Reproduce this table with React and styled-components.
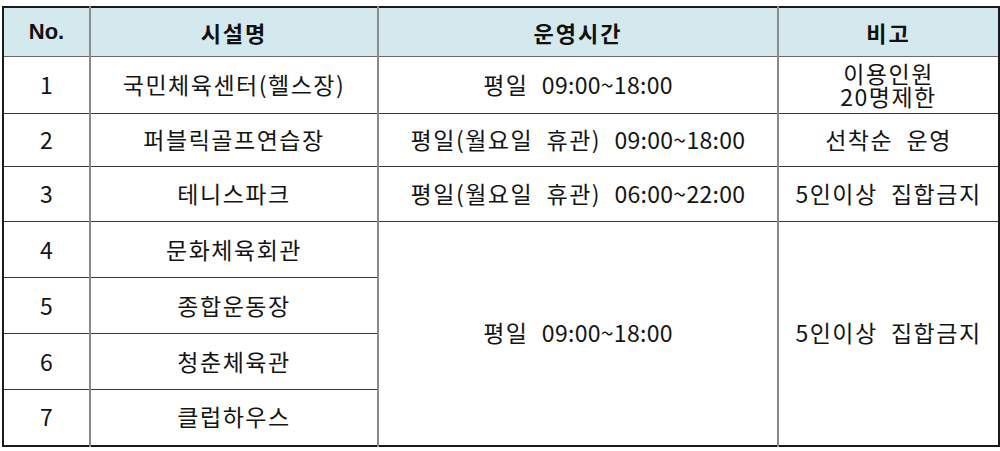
import styled, { createGlobalStyle } from "styled-components";

const GlobalStyle = createGlobalStyle`
    html, body {
        margin: 0;
        padding: 0;
        background: #ffffff;
    }
    body {
        font-family: "Noto Sans CJK KR", "Noto Sans", sans-serif;
        color: #111;
    }
`;

const rows = [
    { no: 1, name: "국민체육센터(헬스장)", day: "평일", time: "09:00~18:00", note: ["이용인원", "20명제한"], h: 57 },
    { no: 2, name: "퍼블릭골프연습장", day: "평일(월요일  휴관)", time: "09:00~18:00", note: ["선착순  운영"], h: 53 },
    { no: 3, name: "테니스파크", day: "평일(월요일  휴관)", time: "06:00~22:00", note: ["5인이상  집합금지"], h: 55 },
    { no: 4, name: "문화체육회관", h: 56 },
    { no: 5, name: "종합운동장", h: 56 },
    { no: 6, name: "청춘체육관", h: 56 },
    { no: 7, name: "클럽하우스", h: 56 },
];

function Hours({ day, time }) {
    return (
        <>
            {day}  <Styled.Time>{time}</Styled.Time>
        </>
    );
}

export default function App() {
    return (
        <>
            <GlobalStyle />
            <Styled.Page>
                <Styled.Table>
                    <colgroup>
                        <col style={{ width: 87 }} />
                        <col style={{ width: 288 }} />
                        <col style={{ width: 400 }} />
                        <col style={{ width: 221 }} />
                    </colgroup>
                    <thead>
                        <tr>
                            <Styled.Th>No.</Styled.Th>
                            <Styled.Th>시설명</Styled.Th>
                            <Styled.Th>운영시간</Styled.Th>
                            <Styled.Th>비고</Styled.Th>
                        </tr>
                    </thead>
                    <tbody>
                        {rows.map((r) => (
                            <Styled.Row key={r.no} $h={r.h}>
                                <Styled.Td $num>{r.no}</Styled.Td>
                                <Styled.Td>{r.name}</Styled.Td>
                                {r.time && (
                                    <Styled.Td>
                                        <Hours day={r.day} time={r.time} />
                                    </Styled.Td>
                                )}
                                {r.note && (
                                    <Styled.Td $tight={r.note.length > 1}>
                                        {r.note.map((n) => (
                                            <div key={n}>{n}</div>
                                        ))}
                                    </Styled.Td>
                                )}
                                {r.no === 4 && (
                                    <>
                                        <Styled.Td rowSpan={4}>
                                            <Hours day="평일" time="09:00~18:00" />
                                        </Styled.Td>
                                        <Styled.Td rowSpan={4}>5인이상  집합금지</Styled.Td>
                                    </>
                                )}
                            </Styled.Row>
                        ))}
                    </tbody>
                </Styled.Table>
            </Styled.Page>
        </>
    );
}

const Styled = {
    Page: styled.div`
        padding: 6px 2px 5px 2px;
        width: 1000px;
        box-sizing: border-box;
    `,

    Table: styled.table`
        width: 996px;
        table-layout: fixed;
        border-collapse: collapse;
        border: 2px solid #1a1a1a;
    `,

    Th: styled.th`
        height: 48px;
        padding: 0;
        background: #d3e9ee;
        font-size: 22px;
        font-weight: 700;
        letter-spacing: 2px;
        text-align: center;
        color: #111;
        border-left: 2px solid #8a8a8a;
        border-bottom: 1px solid #6a6a6a;
        &:first-child {
            border-left: none;
            font-family: "Liberation Sans", Arial, sans-serif;
            letter-spacing: 0;
        }
    `,

    Row: styled.tr`
        height: ${(p) => p.$h}px;
    `,

    Td: styled.td`
        padding: 0;
        text-align: center;
        vertical-align: middle;
        font-size: 23px;
        letter-spacing: ${(p) => (p.$num ? "0" : "1.5px")};
        line-height: ${(p) => (p.$tight ? "23px" : "1.2")};
        white-space: pre;
        color: #141414;
        border-left: 2px solid #8a8a8a;
        border-top: 1px solid #3a3a3a;
        &:first-child {
            border-left: none;
        }
    `,

    Time: styled.span`
        letter-spacing: 0.3px;
    `,
};
